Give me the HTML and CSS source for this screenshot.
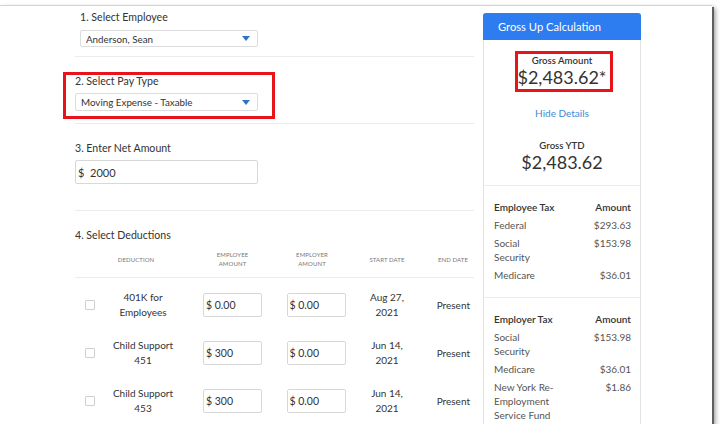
FILE: index.html
```html
<!DOCTYPE html>
<html>
<head>
<meta charset="utf-8">
<link rel="stylesheet" href="styles.css">
</head>
<body>
<div class="window">
  <div class="form">
    <section class="step step-1">
      <div class="label">1. Select Employee</div>
      <div class="select"><span>Anderson, Sean</span><i class="caret"></i></div>
    </section>
    <section class="step step-2">
      <div class="label">2. Select Pay Type</div>
      <div class="select"><span>Moving Expense - Taxable</span><i class="caret"></i></div>
      <div class="highlight hl-paytype"></div>
    </section>
    <section class="step step-3">
      <div class="label">3. Enter Net Amount</div>
      <div class="input net">$&nbsp; 2000</div>
    </section>
    <section class="step step-4">
      <div class="label">4. Select Deductions</div>
      <div class="ded-grid ded-head">
        <div></div>
        <div class="h h-ded">DEDUCTION</div>
        <div class="h h-emp">EMPLOYEE<br>AMOUNT</div>
        <div class="h h-er">EMPLOYER<br>AMOUNT</div>
        <div class="h">START DATE</div>
        <div class="h h-end">END DATE</div>
      </div>
      <div class="ded-rows">
        <div class="ded-grid ded-row">
          <div class="cb-cell"><span class="checkbox"></span></div>
          <div class="name">401K for Employees</div>
          <div class="amt-cell emp"><div class="input amt">$&nbsp;0.00</div></div>
          <div class="amt-cell"><div class="input amt">$&nbsp;0.00</div></div>
          <div class="date">Aug 27, 2021</div>
          <div class="end">Present</div>
        </div>
        <div class="ded-grid ded-row">
          <div class="cb-cell"><span class="checkbox"></span></div>
          <div class="name">Child Support 451</div>
          <div class="amt-cell emp"><div class="input amt">$&nbsp;300</div></div>
          <div class="amt-cell"><div class="input amt">$&nbsp;0.00</div></div>
          <div class="date">Jun 14, 2021</div>
          <div class="end">Present</div>
        </div>
        <div class="ded-grid ded-row">
          <div class="cb-cell"><span class="checkbox"></span></div>
          <div class="name">Child Support 453</div>
          <div class="amt-cell emp"><div class="input amt">$&nbsp;300</div></div>
          <div class="amt-cell"><div class="input amt">$&nbsp;0.00</div></div>
          <div class="date">Jun 14, 2021</div>
          <div class="end">Present</div>
        </div>
      </div>
    </section>
  </div>

  <aside class="panel">
    <div class="panel-head">Gross Up Calculation</div>
    <div class="summary">
      <div class="gross">
        <div class="g-label">Gross Amount</div>
        <div class="g-value">$2,483.62*</div>
        <div class="highlight hl-gross"></div>
      </div>
      <div class="link">Hide Details</div>
      <div class="g-label ytd">Gross YTD</div>
      <div class="g-value">$2,483.62</div>
    </div>
    <div class="tax">
      <div class="tax-head"><span>Employee Tax</span><span>Amount</span></div>
      <div class="tax-rows">
        <span>Federal</span><span class="v">$293.63</span>
        <span>Social Security</span><span class="v">$153.98</span>
        <span>Medicare</span><span class="v">$36.01</span>
      </div>
    </div>
    <div class="tax">
      <div class="tax-head"><span>Employer Tax</span><span>Amount</span></div>
      <div class="tax-rows">
        <span>Social Security</span><span class="v">$153.98</span>
        <span>Medicare</span><span class="v">$36.01</span>
        <span>New York Re-Employment Service Fund</span><span class="v">$1.86</span>
      </div>
    </div>
  </aside>
</div>
</body>
</html>
```

FILE: styles.css
```css
body {
  margin: 0;
  background: #fff;
  font-family: Lato, "Open Sans", "Liberation Sans", sans-serif;
  color: #333;
}

.window {
  margin-top: 5px;
  width: 712px;
  height: 418px;
  border-top: 1px solid #d3d3d3;
  background: #fff;
  box-shadow: 2px 2px 0 #5f5f5f, 3px 3px 5px rgba(0, 0, 0, 0.45);
  overflow: hidden;
  display: flex;
  align-items: flex-start;
}

.form {
  flex: none;
  width: 474px;
  padding-left: 75px;
  box-sizing: border-box;
}

.step {
  position: relative;
  border-bottom: 1px solid #ececec;
}

.label {
  font-size: 10.6px;
  line-height: 14px;
  color: #333;
}

.select {
  box-sizing: border-box;
  border: 1px solid #dcdcdc;
  border-radius: 2px;
  display: flex;
  align-items: center;
  justify-content: space-between;
  padding: 0 7px 0 5px;
  font-size: 9.8px;
  color: #333;
}

.caret {
  width: 0;
  height: 0;
  border-left: 4px solid transparent;
  border-right: 4px solid transparent;
  border-top: 5px solid #2f72c8;
}

.step-1 {
  padding: 4px 0 9px 5px;
}
.step-1 .select {
  margin-top: 6px;
  width: 178px;
  height: 17px;
}

.step-2 {
  padding: 17px 0 12px;
}
.step-2 .select {
  margin-top: 5px;
  width: 183px;
  height: 18px;
}

.highlight {
  position: absolute;
  box-sizing: border-box;
  border: 3px solid #e8141b;
}
.hl-paytype {
  left: -12px;
  top: 15px;
  width: 212px;
  height: 47px;
}

.step-3 {
  padding: 17px 0 26px;
}

.input {
  box-sizing: border-box;
  border: 1px solid #d8d8d8;
  border-radius: 2px;
  display: flex;
  align-items: center;
  color: #333;
}
.net {
  margin-top: 5px;
  width: 183px;
  height: 24px;
  padding-left: 2px;
  font-size: 11px;
}

.step-4 {
  padding: 17px 0 0;
  border-bottom: none;
}

.ded-grid {
  display: grid;
  grid-template-columns: 30px 76px 96px 78px 64px 1fr;
  align-items: center;
}

.ded-head {
  margin-top: 8px;
  padding-bottom: 9px;
  border-bottom: 1px solid #ececec;
}
.h {
  font-size: 6px;
  line-height: 9px;
  color: #777;
  text-align: center;
  letter-spacing: 0.1px;
}
.h-ded {
  padding-right: 14px;
}
.h-emp {
  margin-left: 22px;
  width: 59px;
}
.h-er {
  padding-right: 8px;
}
.h-end {
  text-align: right;
  padding-right: 6px;
}

.ded-rows {
  padding-top: 3px;
}
.ded-row {
  height: 48px;
  font-size: 10px;
  line-height: 15px;
}
.cb-cell {
  display: flex;
  justify-content: center;
}
.checkbox {
  width: 10px;
  height: 10px;
  box-sizing: border-box;
  border: 1px solid #cfcfcf;
  border-radius: 1px;
}
.name {
  text-align: center;
  padding: 0 5px;
}
.amt-cell {
  display: flex;
  justify-content: center;
}
.amt-cell.emp {
  justify-content: flex-start;
  padding-left: 22px;
}
.amt {
  width: 59px;
  height: 24px;
  padding-left: 2px;
  font-size: 10.5px;
}
.date {
  text-align: center;
  padding: 0 8px;
}
.end {
  text-align: right;
  padding-right: 4px;
}

/* side panel */
.panel {
  flex: none;
  margin: 7px 0 0 9px;
  width: 158px;
  box-sizing: border-box;
  border: 1px solid #e3e3e3;
  border-top: none;
  border-radius: 3px 3px 0 0;
}
.panel-head {
  margin: 0 -1px;
  height: 27px;
  line-height: 27px;
  padding-left: 15px;
  background: #2d7cf0;
  color: #fff;
  font-size: 11.2px;
  border-radius: 3px 3px 0 0;
}

.summary {
  padding: 15px 0 13px;
  text-align: center;
  border-bottom: 1px solid #ececec;
}
.gross {
  position: relative;
}
.g-label {
  font-size: 9.6px;
  line-height: 12px;
  font-weight: 600;
  color: #333;
}
.g-value {
  font-size: 18px;
  line-height: 20px;
  color: #333;
}
.hl-gross {
  left: 31px;
  top: -4px;
  width: 98px;
  height: 41px;
}
.link {
  margin-top: 20px;
  font-size: 10px;
  line-height: 12px;
  color: #3d8ad6;
}
.ytd {
  margin-top: 21px;
}

.tax {
  padding: 14px 9px 15px 10px;
  border-bottom: 1px solid #ececec;
  font-size: 10px;
  line-height: 14px;
}
.tax-head {
  display: flex;
  justify-content: space-between;
  font-weight: 600;
  color: #333;
  margin-bottom: 4px;
}
.tax-rows {
  display: grid;
  grid-template-columns: 62px 1fr;
  row-gap: 4px;
  color: #555;
}
.tax-rows .v {
  text-align: right;
}
```
